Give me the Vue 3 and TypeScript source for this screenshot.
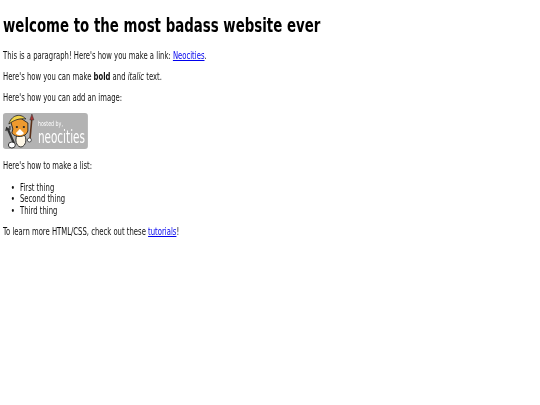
<script setup lang="ts">
const items: string[] = ['First thing', 'Second thing', 'Third thing']
</script>

<template>
  <div class="viewport">
    <main class="page">
      <h1>welcome to the most badass website ever</h1>
      <p>This is a paragraph! Here's how you make a link: <a href="#">Neocities</a>.</p>
      <p>Here's how you can make <strong>bold</strong> and <em>italic</em> text.</p>
      <p>Here's how you can add an image:</p>
      <svg class="badge" viewBox="0 0 85 36" preserveAspectRatio="none" role="img" aria-label="Hosted by Neocities">
        <rect x="0" y="0" width="85" height="36" rx="3" fill="#b3b3b3" />
        <path d="M5 16 L11 30" stroke="#333" stroke-width="2.2" stroke-linecap="round" />
        <path d="M3 18 l1 -4 M7 17 l0 -4" stroke="#333" stroke-width="1.3" />
        <path d="M29 5 L27 27" stroke="#5a3018" stroke-width="1.6" />
        <path d="M29 1 l2 6 h-4z" fill="#a33" stroke="#333" stroke-width=".5" />
        <ellipse cx="9" cy="32" rx="3.5" ry="3" fill="#fff" stroke="#222" stroke-width=".9" />
        <ellipse cx="18" cy="27" rx="5" ry="7" fill="#fff8e8" stroke="#222" stroke-width=".9" />
        <circle cx="26.5" cy="27" r="2" fill="#fff" stroke="#222" stroke-width=".7" />
        <path d="M8 9 L10 16 L9 20 C12 25 23 25 25 18 L25 10 L19 6 C15 5 11 6 8 9Z" fill="#ee9a2e" stroke="#222" stroke-width=".9" />
        <path d="M6 11 C8 3 17 -1 23 6 C17 5 11 7 6 11Z" fill="#f2d34b" stroke="#222" stroke-width=".8" />
        <path d="M13 20 C14 23 20 23 21 20 L17 16Z" fill="#fff" />
        <circle cx="14" cy="14" r="1.1" fill="#222" />
        <circle cx="21" cy="14" r="1.1" fill="#222" />
        <text x="35" y="13" class="hosted" textLength="25" lengthAdjust="spacingAndGlyphs">hosted by,</text>
        <text x="35" y="30" class="neo" textLength="47" lengthAdjust="spacingAndGlyphs">neocities</text>
      </svg>
      <p>Here's how to make a list:</p>
      <ul>
        <li v-for="item in items" :key="item">{{ item }}</li>
      </ul>
      <p>To learn more HTML/CSS, check out these <a href="#">tutorials</a>!</p>
    </main>
  </div>
</template>

<style>
html, body { margin: 0; background: #fff; }
</style>

<style scoped>
.viewport {
  width: 540px;
  height: 405px;
  overflow: hidden;
}
.page {
  box-sizing: border-box;
  width: 755px;
  padding: 2.5px 4.2px;
  transform: scaleX(0.715);
  transform-origin: 0 0;
  filter: blur(0.3px);
  font-family: "DejaVu Sans", sans-serif;
  font-size: 9.6px;
  line-height: 11.5px;
  color: #111;
}
h1 {
  margin: 12px 0 13.5px;
  font-size: 18.7px;
  line-height: 22px;
  color: #000;
}
p { margin: 9.6px 0; }
a { color: #0000ee; }
.badge {
  display: block;
  width: 119px;
  height: 36px;
  margin-bottom: 11.1px;
}
.badge + p { margin-top: 0; }
ul { margin: 10.1px 0 9.1px; padding-left: 23.8px; }
li::marker { content: "\2022\2002\2009"; font-size: 10px; }
.hosted { font-size: 7px; fill: #fff; }
.neo { font-size: 17px; fill: #fff; }
</style>
